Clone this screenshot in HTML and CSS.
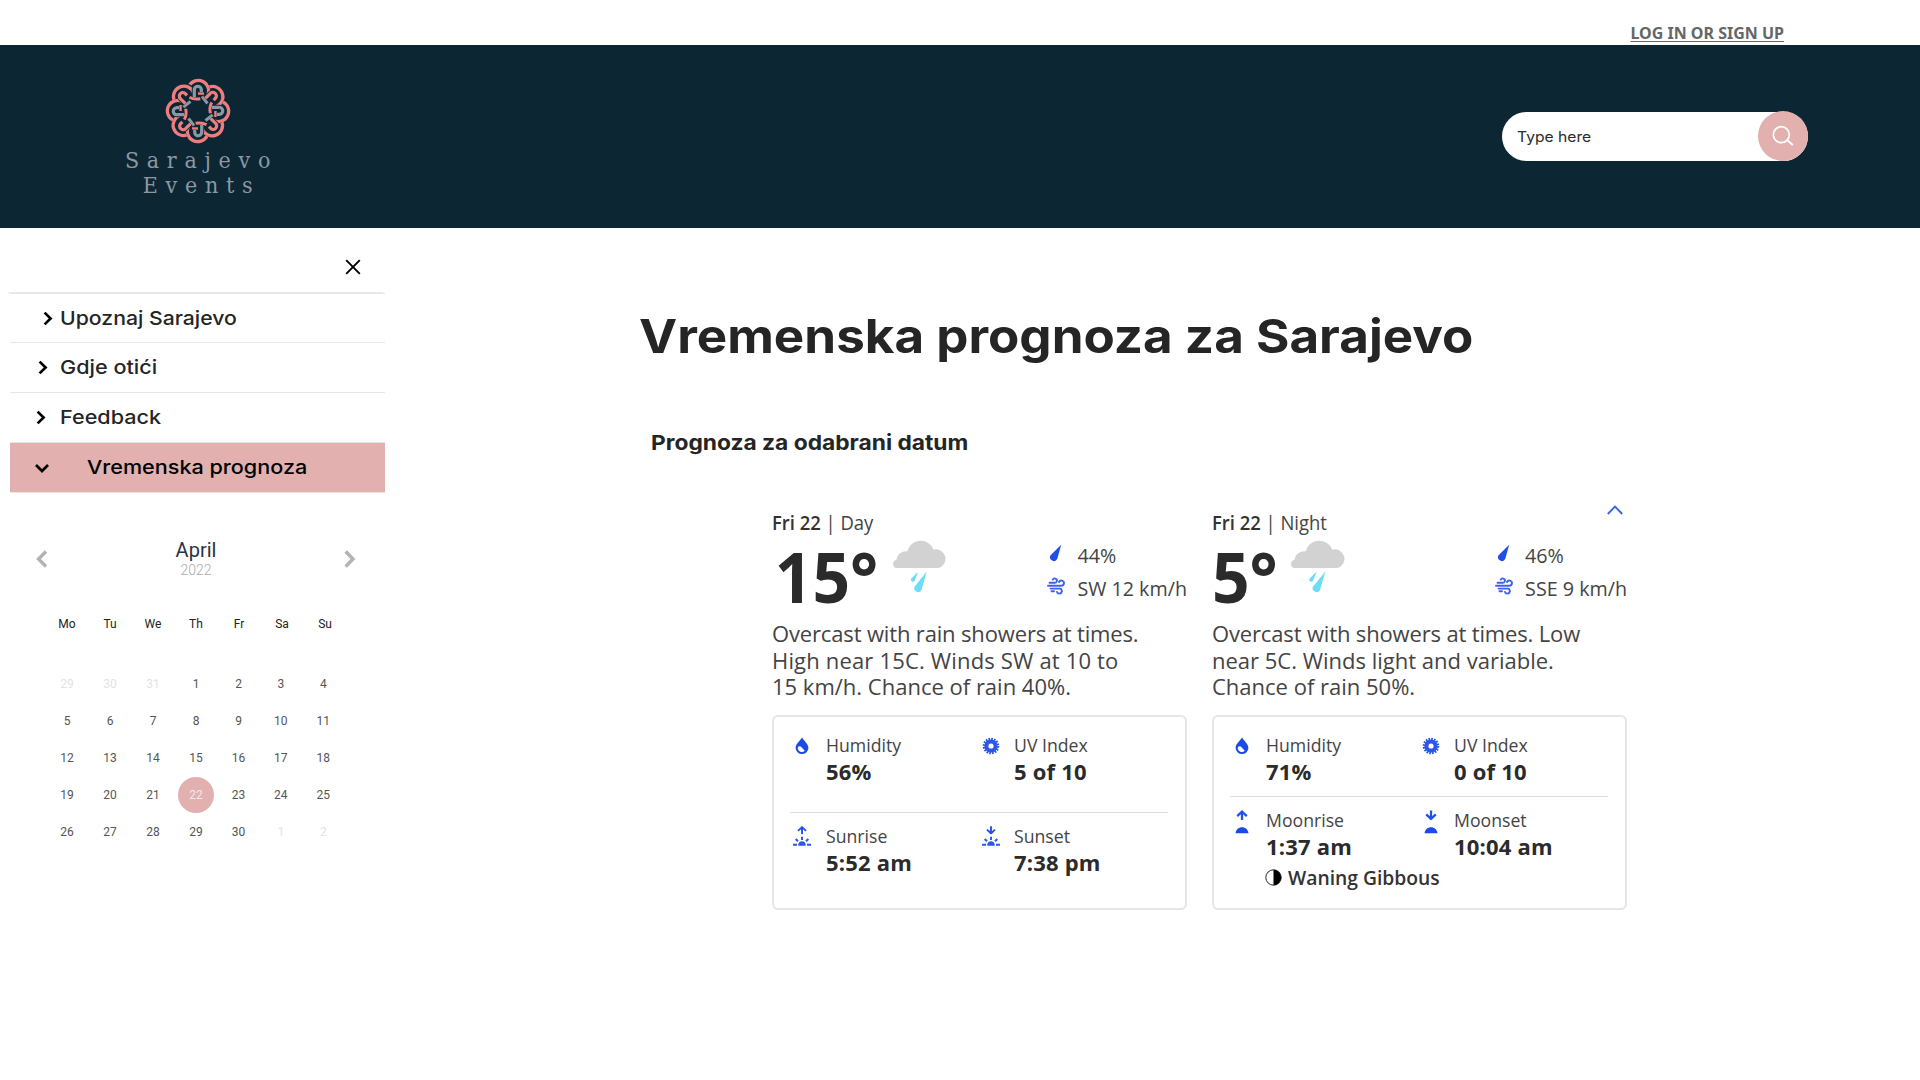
FILE: index.html
```html
<!DOCTYPE html>
<html lang="bs">
<head>
<meta charset="utf-8">
<title>Sarajevo Events</title>
<link rel="stylesheet" href="styles.css">
</head>
<body>
<svg class="defs" aria-hidden="true">
  <symbol id="chev" viewBox="0 0 10 15"><path d="M1.6 1.6 7.6 7.5 1.6 13.4" fill="none" stroke="currentColor" stroke-width="2.7"/></symbol>
  <symbol id="cloud" viewBox="1.8 0.8 52.5 50.5" preserveAspectRatio="none">
    <path d="M4.5 28A4 4 0 0 1 5 20.3C6 14 10.500 11.500 15.500 11.800A13 13 0 0 1 40.500 10.200A9 9 0 1 1 45 28Z" fill="#d2d2d2"/>
    <path d="M34 31.500 29 49.300A3.400 3.400 0 0 1 22.500 46Z" fill="#6cdcf8"/>
    <path d="M26 31.500 22.500 40.200A1.900 1.900 0 0 1 19 38.500Z" fill="#6cdcf8"/>
  </symbol>
  <symbol id="rain" viewBox="0 0 18 18"><path d="M14.200 .8 10.300 14.800A3.700 3.700 0 0 1 3.400 11.500Z" fill="#1f4fe8"/></symbol>
  <symbol id="wind" viewBox="0 0 18 18"><path d="M2.500 5.800H7.500A2.200 2.200 0 1 0 5.800 2.500M1 8.700H14.300A2.600 2.600 0 1 0 12 5M3.500 11.600H12A2.500 2.500 0 1 1 10 15M4.500 14.200H7" fill="none" stroke="#3b63ec" stroke-width="1.900" stroke-linecap="round"/></symbol>
  <symbol id="drop" viewBox="0 0 18 18"><path d="M9 .5C11 3.500 15.400 7.300 15.400 10.700A6.400 6.400 0 0 1 2.600 10.700C2.600 7.300 7 3.500 9 .5Z" fill="#1b4ae6"/><path d="M5 10A4 4 0 0 0 11.800 13.700L7.700 9.500Q6 8.900 5 10Z" fill="#fff"/></symbol>
  <symbol id="uv" viewBox="0 0 18 18"><circle cx="9" cy="9" r="4.600" fill="none" stroke="#2c58e8" stroke-width="4"/><circle cx="9" cy="9" r="7.200" fill="none" stroke="#2c58e8" stroke-width="2.200" stroke-dasharray="1.700 1.128"/></symbol>
  <symbol id="sunbase" viewBox="0 0 18 20"><path d="M0 18.800H4M5.300 18.800H12.700M14 18.800H18" stroke="#2c58e8" stroke-width="2"/><path d="M5.700 18.500A3.300 3.300 0 0 1 12.300 18.500Z" fill="#2c58e8"/><path d="M2.700 13 5 15.300M15.300 13 13 15.300M9 10.800V14" stroke="#2c58e8" stroke-width="2"/></symbol>
  <symbol id="up" viewBox="0 0 12 10"><path d="M6 9.800V1.500M1.200 5.800 6 1.300 10.800 5.800" fill="none" stroke="#2452e8" stroke-width="2.300"/></symbol>
  <symbol id="down" viewBox="0 0 12 10"><path d="M6 .2V8.500M1.200 4.200 6 8.700 10.800 4.200" fill="none" stroke="#2452e8" stroke-width="2.300"/></symbol>
  <symbol id="sunrise" viewBox="0 0 18 20"><use href="#sunbase" width="18" height="20"/><use href="#up" x="4" y="0" width="10" height="8.500"/></symbol>
  <symbol id="sunset" viewBox="0 0 18 20"><use href="#sunbase" width="18" height="20"/><use href="#down" x="4" y="0" width="10" height="8.500"/></symbol>
  <symbol id="moonrise" viewBox="0 0 18 24"><use href="#up" x="3" y="0" width="12" height="10.500"/><path d="M2.500 23.300C3.500 15.300 14.500 15.300 15.500 23.300Z" fill="#1b4ae6"/></symbol>
  <symbol id="moonset" viewBox="0 0 18 24"><use href="#down" x="3" y="0" width="12" height="10.500"/><path d="M2.500 23.300C3.500 15.300 14.500 15.300 15.500 23.300Z" fill="#1b4ae6"/></symbol>
</svg>

<div class="topbar"><a class="login">LOG IN OR SIGN UP</a></div>

<header class="header">
  <div class="logo">
    <svg class="knot" viewBox="-33 -33 66 66" width="66" height="66">
      <defs>
        <path id="loop" d="M-9 -25A10 10 0 1 1 9.500 -15.500"/>
        <path id="hook" d="M-3.700 -14V-20.500A3.500 3.500 0 0 1 3.300 -21.800V-18.800"/>
        <g id="ring"><use href="#loop" stroke="#0d2634" stroke-width="6"/><use href="#loop" stroke="#ee7d7d" stroke-width="3.300"/></g>
        <g id="band">
          <path d="M-8.500 -13.800Q-4 -11 2.300 -12.300" stroke="#ee7d7d" stroke-width="3"/>
          <path d="M0 -17.500H6" stroke="#ee7d7d" stroke-width="2.500"/>
          <path d="M4 -14.700 9.500 -7.500" stroke="#8b98a3" stroke-width="3"/>
        </g>
        <g id="hooks">
          <use href="#hook" stroke="#0d2634" stroke-width="5"/><use href="#hook" stroke="#8b98a3" stroke-width="3.200"/>
          <g transform="rotate(45)"><use href="#hook" stroke="#0d2634" stroke-width="5"/><use href="#hook" stroke="#ee7d7d" stroke-width="3.200"/></g>
        </g>
      </defs>
      <g fill="none">
        <use href="#ring"/><use href="#ring" transform="rotate(45)"/><use href="#ring" transform="rotate(90)"/><use href="#ring" transform="rotate(135)"/><use href="#ring" transform="rotate(180)"/><use href="#ring" transform="rotate(225)"/><use href="#ring" transform="rotate(270)"/><use href="#ring" transform="rotate(315)"/>
        <use href="#band"/><use href="#band" transform="rotate(90)"/><use href="#band" transform="rotate(180)"/><use href="#band" transform="rotate(270)"/>
        <use href="#hooks"/><use href="#hooks" transform="rotate(90)"/><use href="#hooks" transform="rotate(180)"/><use href="#hooks" transform="rotate(270)"/>
      </g>
    </svg>
    <div class="brand"><span>Sarajevo</span><span>Events</span></div>
  </div>
  <div class="search">
    <span class="hint">Type here</span>
    <span class="search-btn"><svg viewBox="0 0 50 50" width="50" height="50"><circle cx="23.300" cy="23.700" r="8" fill="none" stroke="#fff" stroke-width="1.700"/><path d="M28.800 28.800 34.800 34" stroke="#fff" stroke-width="2"/></svg></span>
  </div>
</header>

<div class="content">
  <aside class="sidebar">
    <div class="close"><svg viewBox="0 0 16 16" width="16" height="16"><path d="M1.200 1.200 14.800 14.800M14.800 1.200 1.200 14.800" stroke="#000" stroke-width="1.900"/></svg></div>
    <ul class="menu">
      <li><span class="arrow a1"><svg width="10" height="15"><use href="#chev"/></svg></span><span class="label l1">Upoznaj Sarajevo</span></li>
      <li><span class="arrow a2"><svg width="10" height="15"><use href="#chev"/></svg></span><span class="label">Gdje otići</span></li>
      <li><span class="arrow a3"><svg width="10" height="15"><use href="#chev"/></svg></span><span class="label">Feedback</span></li>
      <li class="active"><span class="arrow a4"><svg width="14" height="10" viewBox="0 0 14 10"><path d="M1 2 7 8 13 2" fill="none" stroke="#000" stroke-width="2.700"/></svg></span><span class="label">Vremenska prognoza</span></li>
    </ul>
    <div class="cal-head">
      <svg width="12" height="18" viewBox="0 0 12 18"><path d="M10 1.500 2.500 9 10 16.500" fill="none" stroke="#b3b3b3" stroke-width="3.400"/></svg>
      <div class="cal-title"><span class="month">April</span><span class="year">2022</span></div>
      <svg width="12" height="18" viewBox="0 0 12 18"><path d="M1.700 1.500 9 9 1.700 16.500" fill="none" stroke="#b3b3b3" stroke-width="3.400"/></svg>
    </div>
    <div class="days"><span>Mo</span><span>Tu</span><span>We</span><span>Th</span><span>Fr</span><span>Sa</span><span>Su</span></div>
    <div class="dates">
      <span class="off">29</span><span class="off">30</span><span class="off">31</span><span>1</span><span>2</span><span>3</span><span>4</span>
      <span>5</span><span>6</span><span>7</span><span>8</span><span>9</span><span>10</span><span>11</span>
      <span>12</span><span>13</span><span>14</span><span>15</span><span>16</span><span>17</span><span>18</span>
      <span>19</span><span>20</span><span>21</span><span class="sel">22</span><span>23</span><span>24</span><span>25</span>
      <span>26</span><span>27</span><span>28</span><span>29</span><span>30</span><span class="off">1</span><span class="off">2</span>
    </div>
  </aside>

  <main class="main">
    <h1 class="title">Vremenska prognoza za Sarajevo</h1>
    <h2 class="subtitle">Prognoza za odabrani datum</h2>
    <div class="weather">
      <section class="col">
        <div class="when"><span><b>Fri 22</b> | Day</span></div>
        <div class="now">
          <span class="temp">15°</span>
          <svg class="cloud" width="55" height="52"><use href="#cloud"/></svg>
          <div class="stats">
            <div><svg width="18" height="18"><use href="#rain"/></svg><span>44%</span></div>
            <div><svg width="18" height="18"><use href="#wind"/></svg><span>SW 12 km/h</span></div>
          </div>
        </div>
        <p class="desc"><span class="tight">Overcast with rain showers at times.</span><br><span class="loose">High near 15C. Winds SW at 10 to</span><br><span>15 km/h. Chance of rain 40%.</span></p>
        <div class="box">
          <div class="pair">
            <div class="item"><svg width="18" height="18"><use href="#drop"/></svg><div><span class="lab">Humidity</span><span class="val">56%</span></div></div>
            <div class="item"><svg width="18" height="18"><use href="#uv"/></svg><div><span class="lab">UV Index</span><span class="val">5 of 10</span></div></div>
          </div>
          <div class="pair">
            <div class="item"><svg width="18" height="20"><use href="#sunrise"/></svg><div><span class="lab">Sunrise</span><span class="val">5:52 am</span></div></div>
            <div class="item"><svg width="18" height="20"><use href="#sunset"/></svg><div><span class="lab">Sunset</span><span class="val">7:38 pm</span></div></div>
          </div>
        </div>
      </section>
      <section class="col night">
        <div class="when"><span><b>Fri 22</b> | Night</span><svg class="fold" width="16" height="10" viewBox="0 0 16 10"><path d="M.8 9 8 1.500 15.200 9" fill="none" stroke="#3c63e6" stroke-width="1.900"/></svg></div>
        <div class="now">
          <span class="temp">5°</span>
          <svg class="cloud" width="56" height="52"><use href="#cloud"/></svg>
          <div class="stats">
            <div><svg width="18" height="18"><use href="#rain"/></svg><span>46%</span></div>
            <div><svg width="18" height="18"><use href="#wind"/></svg><span>SSE 9 km/h</span></div>
          </div>
        </div>
        <p class="desc"><span class="tight">Overcast with showers at times. Low</span><br><span>near 5C. Winds light and variable.</span><br><span>Chance of rain 50%.</span></p>
        <div class="box">
          <div class="pair">
            <div class="item"><svg width="18" height="18"><use href="#drop"/></svg><div><span class="lab">Humidity</span><span class="val">71%</span></div></div>
            <div class="item"><svg width="18" height="18"><use href="#uv"/></svg><div><span class="lab">UV Index</span><span class="val">0 of 10</span></div></div>
          </div>
          <div class="pair">
            <div class="item"><svg width="18" height="24"><use href="#moonrise"/></svg><div><span class="lab">Moonrise</span><span class="val">1:37 am</span></div></div>
            <div class="item"><svg width="18" height="24"><use href="#moonset"/></svg><div><span class="lab">Moonset</span><span class="val">10:04 am</span></div></div>
          </div>
          <div class="phase"><svg width="17" height="17" viewBox="0 0 17 17"><circle cx="8.500" cy="8.500" r="7.700" fill="#fff" stroke="#222" stroke-width="1"/><path d="M8.500 .8A7.700 7.700 0 0 1 8.500 16.200Z" fill="#000"/></svg><span>Waning Gibbous</span></div>
        </div>
      </section>
    </div>
  </main>
</div>
</body>
</html>
```
FILE: styles.css
```css
* { box-sizing: border-box; }
body { margin: 0; height: 1080px; overflow: hidden; background: #fff; color: #252525; font-family: Inter, sans-serif; }
svg { display: block; flex: none; }
span { white-space: nowrap; }
.defs { display: none; }

.topbar { height: 45px; display: flex; justify-content: flex-end; padding: 22px 136px 0 0; }
.login { font: 700 16px/22px "Noto Sans", sans-serif; color: #666; text-decoration: underline; text-underline-offset: 2px; text-decoration-thickness: 1px; }

.header { height: 183px; background: #0d2634; display: flex; justify-content: space-between; align-items: flex-start; padding: 0 112px 0 124px; }
.logo { width: 148px; padding-top: 33px; display: flex; flex-direction: column; align-items: center; }
.brand { display: flex; flex-direction: column; align-items: center; color: #8b98a3; font: 23px/25px "DejaVu Serif Condensed", "DejaVu Serif", serif; font-stretch: condensed; letter-spacing: 7.700px; padding: 4px 0 0 7px; }
.search { width: 306px; height: 49px; margin-top: 67px; background: #fff; border-radius: 25px; display: flex; align-items: center; justify-content: space-between; padding-left: 15px; }
.hint { font-size: 14.500px; color: #2b2b2b; transform: scaleX(1.08); transform-origin: left; }
.search-btn { width: 50px; height: 50px; margin-top: -1px; border-radius: 50%; background: #e1b0af; }

.content { display: flex; }
.sidebar { width: 385px; }
.close { height: 65px; margin: 0 2px 0 8px; padding: 31px 22px 0 0; display: flex; justify-content: flex-end; border-bottom: 1px solid #e9e9e9; }
.menu { list-style: none; margin: 0 0 0 10px; padding: 0; border-bottom: 1px solid #e6e6e6; }
.menu li { height: 50px; border-top: 1px solid #e6e6e6; display: flex; align-items: center; font-size: 19.300px; font-weight: 500; }
.menu li:first-child { height: 49px; }
.menu .active { background: #e1b0af; color: #000; }
.label { transform: scaleX(1.12); transform-origin: left; padding-bottom: 2px; }
.l1 { transform: scaleX(1.1); padding-bottom: 0; }
.arrow { width: 50px; color: #000; }
.a1 { padding-left: 33px; }
.a2 { padding-left: 28px; }
.a3 { padding-left: 26px; }
.a4 { width: 77px; padding-left: 25px; }

.cal-head { display: flex; justify-content: space-between; padding: 46px 29px 0 36px; font-family: Roboto, sans-serif; }
.cal-head svg { margin-top: 11px; }
.cal-title { display: flex; flex-direction: column; align-items: center; }
.month { font-size: 20px; line-height: 22px; color: #2b333f; }
.year { font-size: 14px; line-height: 18px; font-weight: 300; color: #aaa; }
.days, .dates { display: grid; font-family: Roboto, sans-serif; text-align: center; }
.days { grid-template-columns: repeat(7, 43px); margin: 33px 0 0 45.500px; font-size: 12px; line-height: 24px; color: #222; }
.dates { grid-template-columns: repeat(4, 43px) 42px repeat(2, 42.500px); grid-auto-rows: 37px; margin: 30px 0 0 45.500px; font-size: 12px; line-height: 37px; color: #555; }
.off { color: #dfe3e6; }
.sel { width: 36px; height: 36px; line-height: 36px; margin: 0 auto; border-radius: 50%; background: #e1b0af; color: #f6e9ea; }

.main { padding-left: 254px; }
.title { width: max-content; margin: 78px 0 0; font-size: 46.700px; line-height: 60px; font-weight: 700; transform: scaleX(1.095); transform-origin: left; }
.subtitle { width: max-content; margin: 62px 0 0 12px; font-size: 20.600px; line-height: 30px; font-weight: 700; transform: scaleX(1.105); transform-origin: left; }
.weather { margin: 52px 0 0 133px; display: grid; grid-template-columns: 415px 415px; gap: 25px; font-family: "Open Sans", sans-serif; color: #444; }
.when { height: 25px; line-height: 26px; font-size: 19.400px; display: flex; justify-content: space-between; }
.when span { transform: scaleX(.95); transform-origin: left; }
.when b { font-weight: 600; color: #333; }
.fold { margin: -5px 4px 0 0; }
.now { height: 85px; display: flex; }
.temp { width: 121px; font-size: 70px; line-height: 82px; font-weight: 700; color: #2b2b2b; padding-left: 3px; transform: scaleX(.94); transform-origin: left; }
.night .temp { width: 79px; padding-left: 0; }
.cloud { margin-top: 5px; }
.stats { margin: 5px 0 0 auto; }
.stats div { display: flex; height: 32.500px; gap: 12px; font-size: 19.700px; line-height: 32.500px; }
.stats svg { margin-top: 4px; }
.desc { margin: 0; height: 95px; font-size: 22px; line-height: 26.500px; }
.tight { letter-spacing: -.15px; }
.loose { letter-spacing: .17px; }
.box { height: 195px; border: 2px solid #e6e6e6; border-radius: 6px; padding: 16px 17px 0 16px; }
.pair { display: grid; grid-template-columns: 188px 1fr; height: 80px; border-bottom: 1.500px solid #ddd; padding-left: 3px; }
.pair + .pair { border: 0; padding-top: 10.500px; }
.night .pair { height: 64px; }
.item { display: flex; gap: 15px; }
.item + .item { gap: 14px; padding-left: 1px; }
.item svg { margin-top: 4px; }
.pair + .pair svg { margin-top: 2px; }
.item div { display: flex; flex-direction: column; }
.lab { font-size: 19px; line-height: 25px; transform: scaleX(.93); transform-origin: left; }
.val { font-size: 22px; line-height: 26px; letter-spacing: .2px; font-weight: 700; color: #2b2b2b; }
.phase { display: flex; gap: 6px; padding: 4px 0 0 35px; font-size: 19.300px; line-height: 25px; font-weight: 600; color: #333; }
.phase svg { margin-top: 4px; }
```
